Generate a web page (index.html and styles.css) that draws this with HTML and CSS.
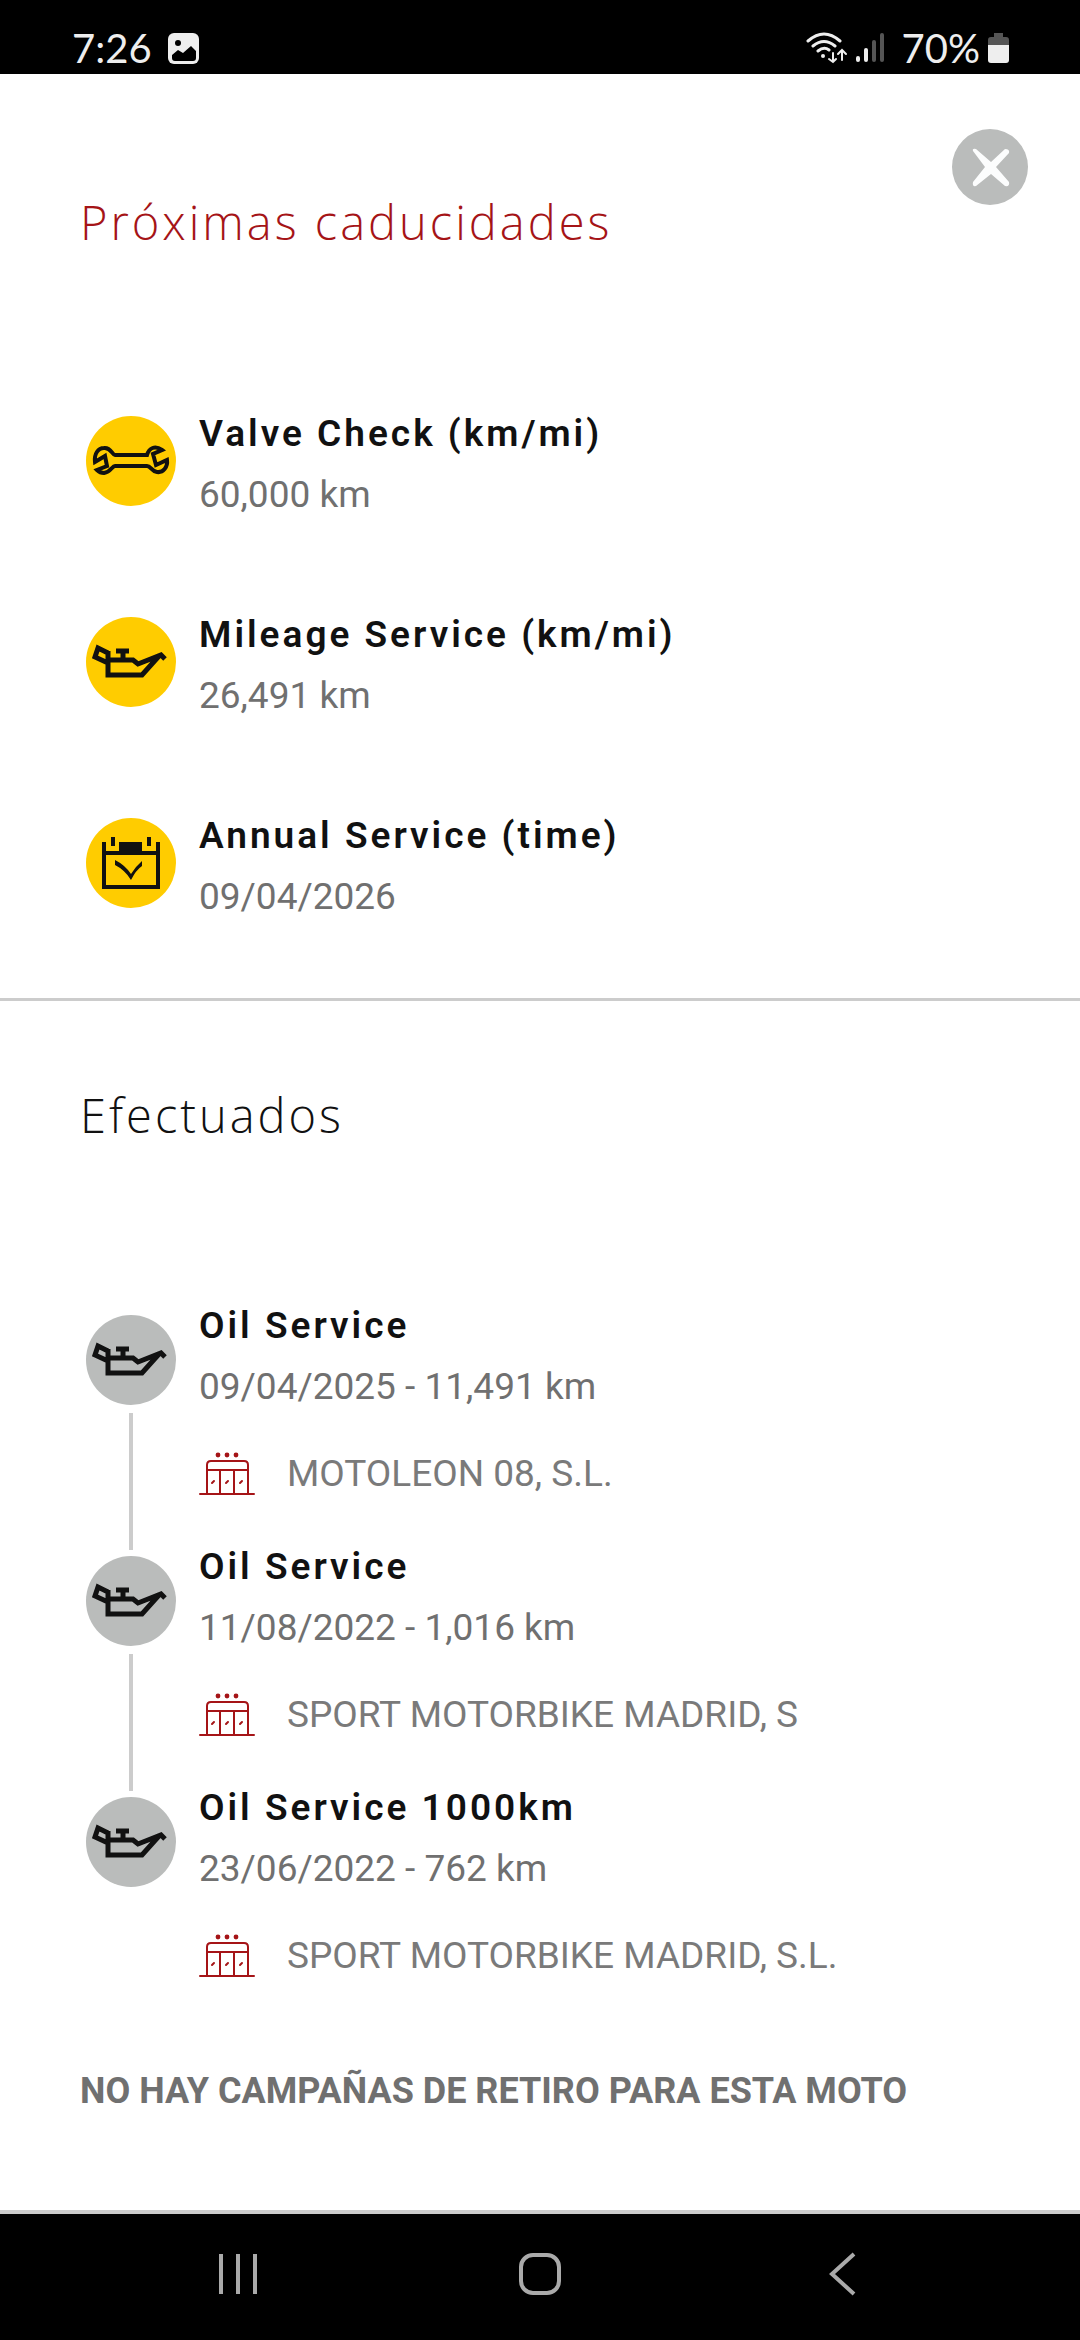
FILE: index.html
```html
<!DOCTYPE html>
<html lang="es">
<head>
<meta charset="utf-8">
<meta name="viewport" content="width=device-width, initial-scale=1">
<title>Mantenimiento</title>
<link rel="stylesheet" href="styles.css">
</head>
<body>
<svg class="symbols" aria-hidden="true">
  <symbol id="oil" viewBox="0 0 90 90">
    <path d="M22 34V58H56L73 39M22 43H47L52 47L75 38L79 42M37 43V34M30 34H43M22 36L12 31L9 40L22 46" fill="none" stroke="currentColor" stroke-width="5"/>
  </symbol>
  <symbol id="wrench" viewBox="0 0 90 90">
    <path d="M29 39H61C63 32 69 29 76 34L67 38L70 49L81 44C82 51 77 57 71 56C65 55 65 50 61 50H29C26 50 25 56 18 57C15 57 13 56 11 54L21 50L19 40L9 46C8 38 12 32 18 32C25 31 26 39 29 39Z" fill="none" stroke="currentColor" stroke-width="4"/>
  </symbol>
  <symbol id="calendar" viewBox="0 0 90 90">
    <path d="M18 24V69H72V24M18 35H72M27 19V28M63 19V28" fill="none" stroke="currentColor" stroke-width="4"/>
    <path d="M33 24H56V35H33Z" fill="currentColor"/>
    <path d="M29 42Q39 47 45 56Q50 48 56 43V48Q50 52 45 62Q39 52 29 47Z" fill="currentColor"/>
  </symbol>
  <symbol id="shop" viewBox="0 0 56 44">
    <g fill="none" stroke="currentColor" stroke-width="2" stroke-linecap="round">
      <path d="M1 42H55M8 42V13Q8 9 12 9H45Q49 9 49 13V42M8 18H49M21 18V42M35 18V42M13 31L15 29M27 31L29 29M41 31L43 29"/>
    </g>
    <g fill="currentColor"><circle cx="19" cy="3" r="2.4"/><circle cx="28" cy="3" r="2.4"/><circle cx="37" cy="3" r="2.4"/></g>
  </symbol>
</svg>

<div class="status">
  <div class="status-side">
    <time>7:26</time>
    <svg class="photo" viewBox="0 0 31 31"><rect width="31" height="31" rx="6" fill="#eee"/><circle cx="10" cy="10" r="3" fill="#000"/><path d="M4 22L10 17L15 20L23 13L28 18V25Q28 28 25 28H7Q4 28 4 25Z" fill="#000"/></svg>
  </div>
  <div class="status-side">
    <svg class="wifi" viewBox="0 0 42 32" fill="none" stroke="#eee" stroke-width="3" stroke-linecap="round"><path d="M2 9Q18-5 34 9M7 14Q18 5 29 14M12 19Q18 14 23 18"/><circle cx="17" cy="24" r="2" fill="#eee" stroke="none"/><path d="M27 21V30M23 27L27 30L30 27M36 28V18M32 22L36 18L40 22" stroke-width="2"/></svg>
    <svg class="signal" viewBox="0 0 28 30" stroke-width="4" stroke-linecap="round"><path d="M2 25V27M10 17V27" stroke="#eee"/><path d="M18 9V27M26 2V27" stroke="#555"/></svg>
    <span>70%</span>
    <svg class="battery" viewBox="0 0 21 30"><path d="M6 0H15V4H18Q21 4 21 7V12H0V7Q0 4 3 4H6Z" fill="#555"/><path d="M0 12H21V27Q21 30 18 30H3Q0 30 0 27Z" fill="#eee"/></svg>
  </div>
</div>

<main>
  <section class="upcoming">
    <button class="close" aria-label="Cerrar"><svg viewBox="0 0 76 76"><path d="M21 22Q20 19 24 20L39 33L53 20Q58 20 57 24L44 38L57 53Q58 58 53 57L39 45L24 57Q20 58 21 53L33 38Z" fill="#fcfdfd"/></svg></button>
    <h1>Próximas caducidades</h1>
    <ul class="services">
      <li class="service"><svg class="badge due"><use href="#wrench"/></svg><div><h2>Valve Check (km/mi)</h2><p>60,000 km</p></div></li>
      <li class="service"><svg class="badge due"><use href="#oil"/></svg><div><h2>Mileage Service (km/mi)</h2><p>26,491 km</p></div></li>
      <li class="service"><svg class="badge due"><use href="#calendar"/></svg><div><h2>Annual Service (time)</h2><p>09/04/2026</p></div></li>
    </ul>
  </section>
  <section class="completed">
    <h1>Efectuados</h1>
    <ol class="history">
      <li class="entry"><div class="track"><svg class="badge"><use href="#oil"/></svg></div><div><h2>Oil Service</h2><p>09/04/2025 - 11,491 km</p><p class="dealer"><svg><use href="#shop"/></svg>MOTOLEON 08, S.L.</p></div></li>
      <li class="entry"><div class="track"><svg class="badge"><use href="#oil"/></svg></div><div><h2>Oil Service</h2><p>11/08/2022 - 1,016 km</p><p class="dealer"><svg><use href="#shop"/></svg>SPORT MOTORBIKE MADRID, S</p></div></li>
      <li class="entry"><div class="track"><svg class="badge"><use href="#oil"/></svg></div><div><h2>Oil Service 1000km</h2><p>23/06/2022 - 762 km</p><p class="dealer"><svg><use href="#shop"/></svg>SPORT MOTORBIKE MADRID, S.L.</p></div></li>
    </ol>
    <p class="recall">NO HAY CAMPAÑAS DE RETIRO PARA ESTA MOTO</p>
  </section>
</main>

<nav class="system-nav">
  <button aria-label="Recientes"><svg viewBox="0 0 44 44"><path d="M5 2V42M22 2V42M39 2V42"/></svg></button>
  <button aria-label="Inicio"><svg viewBox="0 0 44 44"><rect x="3" y="3" width="38" height="38" rx="12"/></svg></button>
  <button aria-label="Atrás"><svg viewBox="0 0 44 44"><path d="M34 2L12 22L34 42"/></svg></button>
</nav>
</body>
</html>
```
FILE: styles.css
```css
* { box-sizing: border-box; }

body {
  margin: 0;
  min-height: 100vh;
  display: flex;
  flex-direction: column;
  background: #fff;
  color: #111;
  font-family: Roboto, sans-serif;
}

h1, h2, p, ul, ol { margin: 0; padding: 0; }
ul, ol { list-style: none; }
svg { display: block; flex: none; }
button { border: 0; padding: 0; background: none; }
.symbols { position: absolute; width: 0; height: 0; }

.status {
  display: flex;
  justify-content: space-between;
  height: 74px;
  padding: 22px 71px 0 72px;
  background: #000;
  color: #eee;
  font: 40px/52px Lato, sans-serif;
}
.status-side { display: flex; align-items: center; }
.photo { width: 31px; height: 31px; margin-left: 16px; }
.wifi { width: 42px; height: 32px; margin-right: 8px; }
.signal { width: 28px; height: 30px; margin-right: 18px; }
.battery { width: 21px; height: 30px; margin-left: 8px; }

main { flex: 1; border-bottom: 4px solid #ccc; }

h1 {
  font: 300 47px/64px "Open Sans", sans-serif;
  letter-spacing: 3px;
}
h2 {
  font-size: 37px;
  font-weight: 600;
  line-height: 61px;
  letter-spacing: 3px;
}
p { font-size: 37px; line-height: 61px; color: #707070; }

.upcoming {
  position: relative;
  padding: 116px 80px 71px;
  border-bottom: 3px solid #ccc;
}
.upcoming h1 { color: #a51417; }
.close {
  position: absolute;
  top: 55px;
  right: 52px;
  width: 76px;
  height: 76px;
  border-radius: 50%;
  background: #babcbb;
}

.services { display: grid; gap: 79px; padding-top: 149px; }
.service, .entry { display: flex; gap: 23px; padding-left: 6px; }
.service .badge { margin-top: 13px; }
.badge {
  width: 90px;
  height: 90px;
  border-radius: 50%;
  background: #babcbb;
}
.due { background: #fc0; }

.completed { padding: 82px 80px 0; }
.history { padding-top: 148px; }
.entry { padding-bottom: 32px; }
.track {
  display: flex;
  flex-direction: column;
  align-items: center;
  gap: 8px;
  padding-top: 20px;
  margin-bottom: -46px;
}
.entry:not(:last-child) .track::after {
  content: "";
  flex: 1;
  width: 4px;
  background: #ccc;
}
.dealer { display: flex; align-items: center; gap: 32px; margin-top: 26px; color: #7a7a7a; }
.dealer svg { width: 56px; height: 44px; color: #a51417; }

.recall {
  padding-top: 43px;
  font-size: 36px;
  font-weight: 700;
}

.system-nav {
  display: grid;
  grid-template-columns: repeat(3, 1fr);
  height: 126px;
  padding: 0 87px 6px;
  background: #000;
}
.system-nav button { display: flex; align-items: center; justify-content: center; }
.system-nav svg {
  width: 44px;
  height: 44px;
  fill: none;
  stroke: #aaa;
  stroke-width: 4;
}
```
